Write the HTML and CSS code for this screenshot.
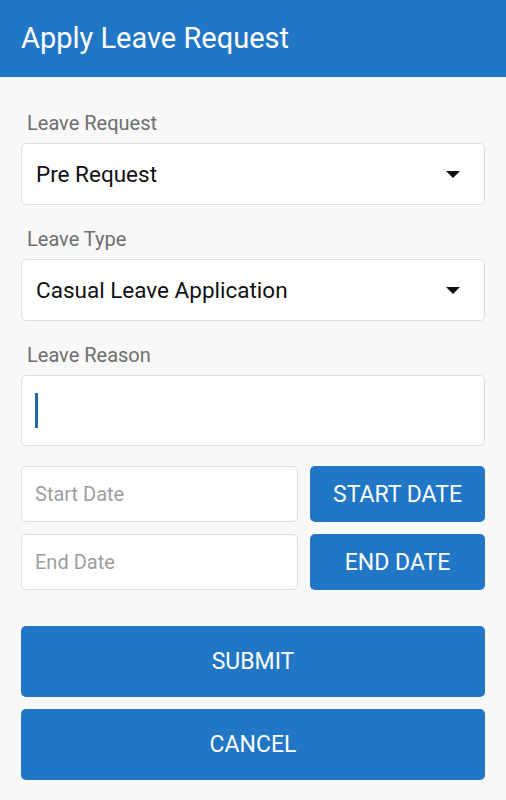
FILE: index.html
```html
<!DOCTYPE html>
<html>
<head>
    <title>Apply Leave Request</title>
    <link rel="stylesheet" href="styles.css">
</head>
<body>
    <div class="toolbar">Apply Leave Request</div>

    <div class="form">
        <div class="label">Leave Request</div>
        <div class="select-box">
            <span>Pre Request</span>
            <svg class="arrow" width="14" height="7" viewBox="0 0 14 7"><path d="M0 0 L14 0 L7 7 Z" fill="#111"/></svg>
        </div>

        <div class="label">Leave Type</div>
        <div class="select-box">
            <span>Casual Leave Application</span>
            <svg class="arrow" width="14" height="7" viewBox="0 0 14 7"><path d="M0 0 L14 0 L7 7 Z" fill="#111"/></svg>
        </div>

        <div class="label">Leave Reason</div>
        <div class="reason-box">
            <span class="caret"></span>
        </div>

        <div class="date-row">
            <div class="date-input">Start Date</div>
            <button class="btn">START DATE</button>
        </div>
        <div class="date-row">
            <div class="date-input">End Date</div>
            <button class="btn">END DATE</button>
        </div>

        <div class="actions">
            <button class="btn btn-wide">SUBMIT</button>
            <button class="btn btn-wide">CANCEL</button>
        </div>
    </div>
</body>
</html>
```

FILE: styles.css
```css
body {
    margin: 0;
    background-color: #f8f8f8;
    font-family: Roboto, "Liberation Sans", sans-serif;
}
.toolbar {
    height: 77px;
    display: flex;
    align-items: center;
    padding: 0 0 1px 21px;
    box-sizing: border-box;
    background-color: #2176c5;
    color: #fff;
    font-size: 29px;
}
.form {
    padding: 34px 21px 0 21px;
}
.label {
    font-size: 20px;
    line-height: 24px;
    color: #6f6f6f;
    padding-left: 6px;
    margin-bottom: 8px;
}
.select-box {
    height: 62px;
    display: flex;
    align-items: center;
    justify-content: space-between;
    padding: 0 24px 0 14px;
    box-sizing: border-box;
    background-color: #fff;
    border: 1px solid #dedede;
    border-radius: 5px;
    font-size: 22.5px;
    color: #111;
    margin-bottom: 22px;
}
.reason-box {
    height: 71px;
    padding: 17px 13px;
    box-sizing: border-box;
    background-color: #fff;
    border: 1px solid #dedede;
    border-radius: 5px;
    margin-bottom: 20px;
}
.caret {
    display: block;
    width: 3px;
    height: 35px;
    background-color: #1d6aa6;
}
.date-row {
    display: grid;
    grid-template-columns: 1fr 175px;
    gap: 12px;
    height: 56px;
    margin-bottom: 12px;
}
.date-input {
    display: flex;
    align-items: center;
    padding-left: 13px;
    background-color: #fff;
    border: 1px solid #dedede;
    border-radius: 5px;
    font-size: 20px;
    color: #9e9e9e;
}
.btn {
    border: none;
    border-radius: 5px;
    background-color: #2176c5;
    color: #fff;
    font-family: Roboto, "Liberation Sans", sans-serif;
    font-size: 23px;
    padding: 0;
    cursor: pointer;
}
.actions {
    display: flex;
    flex-direction: column;
    gap: 12px;
    margin-top: 36px;
}
.btn-wide {
    height: 71px;
}
```
